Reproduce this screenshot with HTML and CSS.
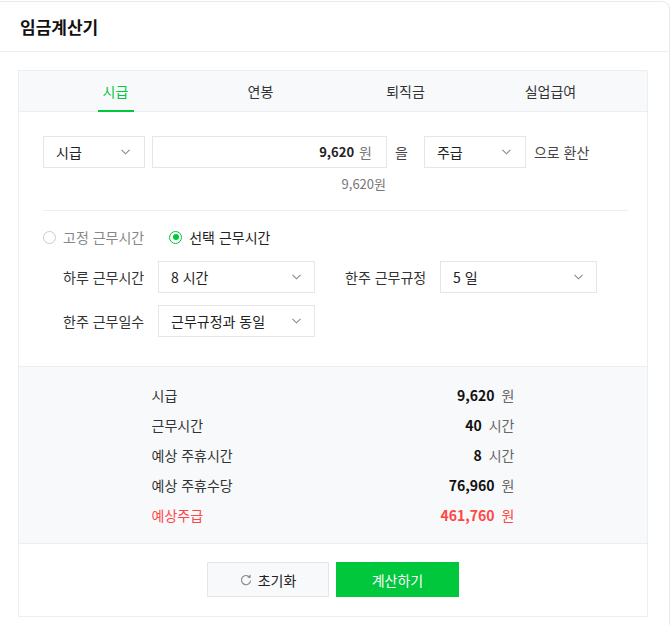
FILE: index.html
```html
<!DOCTYPE html>
<html lang="ko">
<head>
    <meta charset="UTF-8">
    <meta name="viewport" content="width=device-width, initial-scale=1.0">
    <title>임금계산기</title>
    <link rel="stylesheet" href="styles.css">
</head>
<body>
    <div class="calc-card">
        <div class="calc-header">
            <h2>임금계산기</h2>
        </div>
        <div class="calc-body">
            <div class="calc-box">
                <ul class="tab-list">
                    <li class="tab active">시급</li>
                    <li class="tab">연봉</li>
                    <li class="tab">퇴직금</li>
                    <li class="tab">실업급여</li>
                </ul>

                <div class="calc-form">
                    <div class="convert-row">
                        <div class="dropdown unit-select">
                            <span>시급</span>
                            <svg class="chevron" width="9" height="6" viewBox="0 0 9 6"><path d="M0.5 0.8 L4.5 4.8 L8.5 0.8" fill="none" stroke="#888" stroke-width="1.1"/></svg>
                        </div>
                        <div class="amount-input">
                            <strong>9,620</strong><span class="unit">원</span>
                        </div>
                        <span class="particle">을</span>
                        <div class="dropdown unit-select">
                            <span>주급</span>
                            <svg class="chevron" width="9" height="6" viewBox="0 0 9 6"><path d="M0.5 0.8 L4.5 4.8 L8.5 0.8" fill="none" stroke="#888" stroke-width="1.1"/></svg>
                        </div>
                        <span class="convert-text">으로 환산</span>
                    </div>
                    <div class="convert-hint">9,620원</div>

                    <div class="divider"></div>

                    <div class="radio-row">
                        <label class="radio"><span class="radio-mark"></span>고정 근무시간</label>
                        <label class="radio checked"><span class="radio-mark"></span>선택 근무시간</label>
                    </div>

                    <div class="option-grid">
                        <span class="option-label">하루 근무시간</span>
                        <div class="dropdown">
                            <span>8 시간</span>
                            <svg class="chevron" width="9" height="6" viewBox="0 0 9 6"><path d="M0.5 0.8 L4.5 4.8 L8.5 0.8" fill="none" stroke="#888" stroke-width="1.1"/></svg>
                        </div>
                        <span class="option-label second">한주 근무규정</span>
                        <div class="dropdown">
                            <span>5 일</span>
                            <svg class="chevron" width="9" height="6" viewBox="0 0 9 6"><path d="M0.5 0.8 L4.5 4.8 L8.5 0.8" fill="none" stroke="#888" stroke-width="1.1"/></svg>
                        </div>
                        <span class="option-label">한주 근무일수</span>
                        <div class="dropdown">
                            <span>근무규정과 동일</span>
                            <svg class="chevron" width="9" height="6" viewBox="0 0 9 6"><path d="M0.5 0.8 L4.5 4.8 L8.5 0.8" fill="none" stroke="#888" stroke-width="1.1"/></svg>
                        </div>
                    </div>
                </div>

                <div class="result-area">
                    <dl class="result-list">
                        <div class="result-row">
                            <dt>시급</dt>
                            <dd><strong>9,620</strong><span class="unit">원</span></dd>
                        </div>
                        <div class="result-row">
                            <dt>근무시간</dt>
                            <dd><strong>40</strong><span class="unit">시간</span></dd>
                        </div>
                        <div class="result-row">
                            <dt>예상 주휴시간</dt>
                            <dd><strong>8</strong><span class="unit">시간</span></dd>
                        </div>
                        <div class="result-row">
                            <dt>예상 주휴수당</dt>
                            <dd><strong>76,960</strong><span class="unit">원</span></dd>
                        </div>
                        <div class="result-row total">
                            <dt>예상주급</dt>
                            <dd><strong>461,760</strong><span class="unit">원</span></dd>
                        </div>
                    </dl>
                </div>

                <div class="button-row">
                    <button class="reset-button">
                        <svg width="12" height="12" viewBox="0 0 12 12"><path d="M9.6 3.2 A4.6 4.6 0 1 0 10.6 6.6" fill="none" stroke="#888" stroke-width="1.1"/><path d="M7.4 2.6 L10 3.4 L10.2 0.8" fill="none" stroke="#888" stroke-width="1.1"/></svg>
                        초기화
                    </button>
                    <button class="calc-button">계산하기</button>
                </div>
            </div>
        </div>
    </div>
</body>
</html>
```

FILE: styles.css
```css
body {
    margin: 0;
    padding: 0;
    font-family: "Noto Sans CJK KR", "Noto Sans", sans-serif;
    font-size: 14px;
    line-height: 20px;
    color: #222;
    background-color: #fff;
}
.calc-card {
    margin: 1px 2px 0 -1px;
    border: 1px solid #e8e9ec;
    border-bottom: none;
    border-radius: 0 8px 0 0;
    background-color: #fff;
}
.calc-header {
    height: 49px;
    border-bottom: 1px solid #eceef1;
    display: flex;
    align-items: center;
    padding-left: 20px;
}
.calc-header h2 {
    margin: 0;
    font-size: 17px;
    font-weight: bold;
    line-height: 22px;
    color: #111;
}
.calc-body {
    padding: 18px 21px 9px 18px;
}
.calc-box {
    border: 1px solid #eceef1;
}

/* 탭 */
.tab-list {
    list-style: none;
    margin: 0;
    padding: 0 24px;
    display: flex;
    height: 40px;
    background-color: #f8f9fb;
    border-bottom: 1px solid #eceef1;
}
.tab {
    flex: 1;
    display: flex;
    justify-content: center;
    align-items: center;
    color: #333;
}
.tab.active {
    color: #00c73c;
    position: relative;
}
.tab.active::after {
    content: "";
    position: absolute;
    bottom: -1px;
    left: 50%;
    width: 36px;
    margin-left: -18px;
    height: 2px;
    background-color: #00c73c;
}

/* 입력 폼 */
.calc-form {
    padding: 24px 19px 29px 24px;
}
.convert-row {
    display: flex;
    align-items: center;
}
.dropdown {
    height: 30px;
    border: 1px solid #e3e6eb;
    background-color: #fff;
    display: flex;
    align-items: center;
    justify-content: space-between;
    padding: 0 14px 0 12px;
    color: #222;
}
.unit-select {
    width: 74px;
}
.amount-input {
    width: 205px;
    height: 30px;
    margin-left: 7px;
    border: 1px solid #e3e6eb;
    display: flex;
    align-items: center;
    justify-content: flex-end;
    padding: 0 14px 0 14px;
}
.amount-input strong {
    font-size: 13px;
}
.unit {
    color: #777;
    margin-left: 5px;
}
.particle {
    margin: 0 16px 0 8px;
    color: #444;
}
.convert-text {
    margin-left: 8px;
    color: #444;
}
.convert-hint {
    width: 343px;
    text-align: right;
    margin-top: 6px;
    color: #777;
    font-size: 13px;
}
.divider {
    height: 1px;
    background-color: #eceef1;
    margin-top: 16px;
}
.radio-row {
    display: flex;
    gap: 25px;
    margin-top: 16px;
}
.radio {
    display: flex;
    align-items: center;
    color: #888;
}
.radio.checked {
    color: #222;
}
.radio-mark {
    width: 11px;
    height: 11px;
    border: 1px solid #ccc;
    border-radius: 50%;
    margin-right: 7px;
    position: relative;
}
.radio.checked .radio-mark {
    border-color: #00c73c;
}
.radio.checked .radio-mark::after {
    content: "";
    position: absolute;
    top: 2.5px;
    left: 2.5px;
    width: 6px;
    height: 6px;
    border-radius: 50%;
    background-color: #00c73c;
}
.option-grid {
    display: grid;
    grid-template-columns: 95px 157px 125px 157px;
    row-gap: 12px;
    margin-top: 14px;
    padding-left: 20px;
    align-items: center;
}
.option-grid .dropdown {
    padding-right: 13px;
}
.option-label {
    color: #333;
}
.option-label.second {
    padding-left: 30px;
}

/* 결과 */
.result-area {
    background-color: #f8f9fb;
    border-top: 1px solid #eceef1;
    border-bottom: 1px solid #eceef1;
    padding: 13px 0 13px;
}
.result-list {
    width: 363px;
    margin: 0 auto;
}
.result-row {
    display: flex;
    justify-content: space-between;
    align-items: center;
    height: 30px;
}
.result-row dt {
    color: #333;
}
.result-row dd {
    margin: 0;
    display: flex;
    align-items: center;
}
.result-row dd strong {
    font-size: 14px;
    color: #111;
}
.result-row .unit {
    margin-left: 7px;
    color: #666;
}
.result-row.total dt,
.result-row.total dd strong,
.result-row.total .unit {
    color: #ff4646;
}

/* 버튼 */
.button-row {
    display: flex;
    justify-content: center;
    gap: 7px;
    padding: 18px 0 19px;
}
.reset-button,
.calc-button {
    height: 35px;
    font-family: inherit;
    font-size: 14px;
    cursor: pointer;
}
.reset-button {
    width: 122px;
    background-color: #f8f9fb;
    border: 1px solid #e3e6eb;
    color: #222;
    display: flex;
    align-items: center;
    justify-content: center;
    gap: 6px;
}
.calc-button {
    width: 123px;
    background-color: #00c73c;
    color: #fff;
    border: none;
}
```
